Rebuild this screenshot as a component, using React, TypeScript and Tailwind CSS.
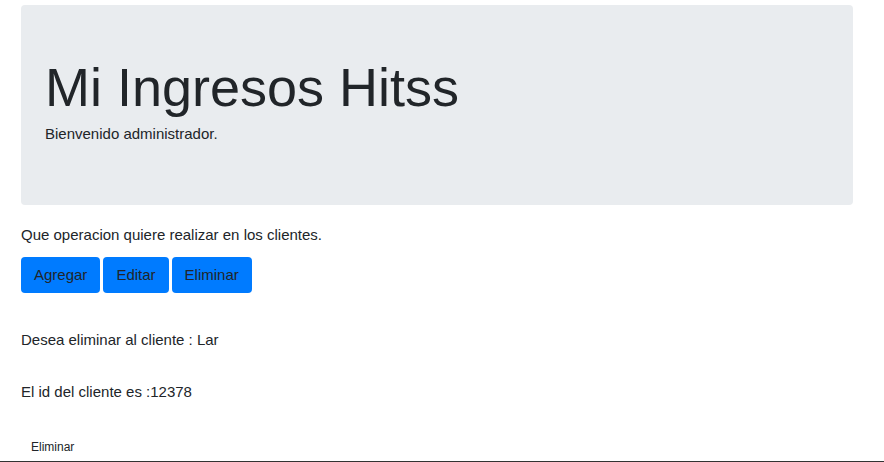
export default function App() {
  const ops = ["Agregar", "Editar", "Eliminar"];

  return (
    <div className="w-[884px] h-[462px] overflow-hidden bg-white text-[#212529] font-['Liberation_Sans',Arial,sans-serif] flex flex-col">
      <div className="px-[21px] pt-[5px] flex flex-col">
        {/* Jumbotron */}
        <div className="w-[832px] h-[200px] bg-[#e9ecef] rounded-[4px] px-[24px] pt-[50px]">
          <h1 className="text-[54px] leading-[65px] font-light">Mi Ingresos Hitss</h1>
          <p className="mt-[2px] text-[15px] leading-[24px]">Bienvenido administrador.</p>
        </div>

        <p className="mt-[18px] text-[15px] leading-[24px]">Que operacion quiere realizar en los clientes.</p>

        <div className="mt-[10px] flex gap-[3px]">
          {ops.map(o => (
            <button key={o}
              className="h-[36px] px-[13px] bg-[#007bff] rounded-[4px] text-[15px] text-[#212529]">
              {o}
            </button>
          ))}
        </div>

        <p className="mt-[35px] text-[15px] leading-[24px]">Desea eliminar al cliente : Lar</p>
        <p className="mt-[28px] text-[15px] leading-[24px]">El id del cliente es :12378</p>

        <div className="mt-[36px] pl-[10px] text-[12px] leading-[15px]">Eliminar</div>
      </div>
      <div className="mt-auto border-t border-[#333]" />
    </div>
  );
}
